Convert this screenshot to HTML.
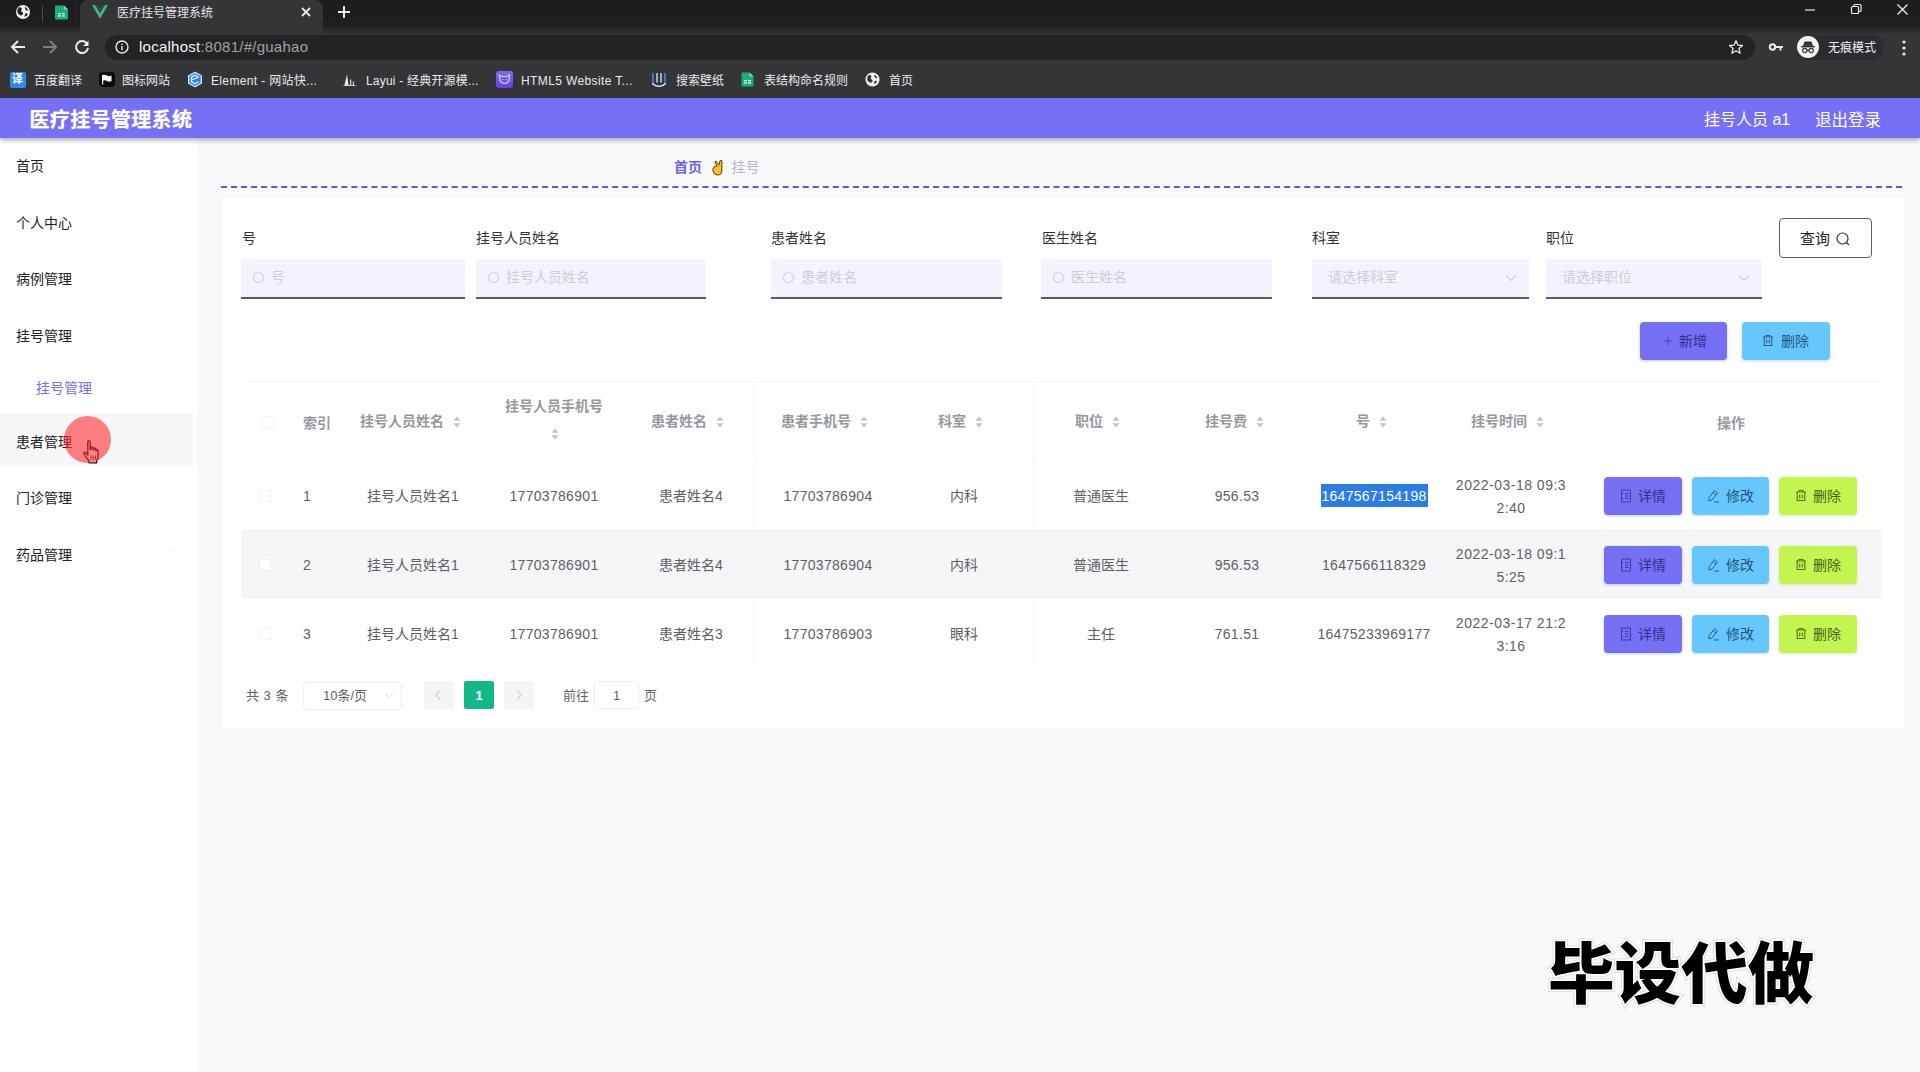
<!DOCTYPE html>
<html lang="zh-CN">
<head>
<meta charset="utf-8">
<title>医疗挂号管理系统</title>
<style>
*{box-sizing:border-box;margin:0;padding:0}
html,body{width:1920px;height:1072px;overflow:hidden}
body{font-family:"Liberation Sans","Noto Sans CJK SC",sans-serif;background:#f9f9fc;color:#333;position:relative;font-size:14px}
.abs{position:absolute}
.t{position:absolute;white-space:nowrap;line-height:1}
/* browser chrome */
#tabstrip{left:0;top:0;width:1920px;height:28px;background:linear-gradient(#1d1d20 0,#1d1d20 20px,#212124 27px,#2a2a2d 27px)}
#toolbar{left:0;top:27px;width:1920px;height:71px;background:#353538}
#activetab{left:80px;top:0;width:243px;height:27px;background:#353538;border-radius:8px 8px 0 0}
#pin2{left:46px;top:0;width:32px;height:27px;background:#1f1f22}
#omni{left:105px;top:35px;width:1650px;height:25px;border-radius:12.500px;background:#232326}
.ct{color:#e8eaed;font-size:12px}
/* app */
#hdr{left:0;top:98px;width:1920px;height:40px;background:#7670f5;box-shadow:0 2px 5px rgba(60,60,80,.45)}
#side{left:0;top:138px;width:197px;height:934px;background:#fff}
#hover{left:0;top:413px;width:193px;height:53px;background:#f7f7fa}
.mi{font-size:14px;color:#222;left:16px}
#card{left:222px;top:198px;width:1682px;height:531px;background:#fff}
#dash{left:221px;top:186px;width:1681px;height:0;border-top:2px dashed #6a63e6}
.lbl{font-size:14px;color:#333}
.inp{height:40px;background:#f4f2fd;border-bottom:2px solid #5b5a6a;top:258.500px}
.ph{font-size:14px;color:#cdcdd6}
.btn{border-radius:4px;height:40px}
.th{font-size:14px;color:#96989f;font-weight:bold}
.td{font-size:14px;color:#5c5f66}
.n{letter-spacing:.3px}
.d{letter-spacing:.5px}
.row{left:241px;width:1641px;height:69px}
.ob{width:78px;height:38px;border-radius:4px;top:0}
</style>
</head>
<body>
<!-- ===== browser chrome ===== -->
<div class="abs" id="tabstrip"></div>
<div class="abs" id="toolbar"></div>
<div class="abs" style="left:0;top:27px;width:80px;height:7px;background:linear-gradient(#232326,#333336)"></div>
<div class="abs" style="left:323px;top:27px;width:1597px;height:7px;background:linear-gradient(#232326,#333336)"></div>
<div class="abs" id="pin2"></div>
<div class="abs" id="activetab"></div>
<div class="abs" id="omni"></div>

<!-- pinned tab 1: globe -->
<svg class="abs" style="left:15px;top:4px" width="16" height="16" viewBox="0 0 16 16"><circle cx="8" cy="8" r="7" fill="#f1f3f4"/><path d="M4.2 3.2c1.3-.2 2.3.4 2.6 1.4.3 1-.9 1.600-.6 2.600.3.900 1.700.700 1.900 1.800.2 1-.8 2.200-2 2.400C4 11 2.500 9.500 2.300 8c-.2-1.800.7-3.800 1.900-4.800zM10 3c1.500.600 2.800 2 3.100 3.600-.9.300-1.900-.1-2.400-.9C10.200 4.900 9.600 3.900 10 3zM10.500 9.500c.8-.4 1.800-.2 2.300.4-.5 1.400-1.600 2.500-3 3-.3-1.200 0-2.800.7-3.400z" fill="#202124"/></svg>
<div class="abs" style="left:42px;top:5px;width:1px;height:17px;background:#4a4c50"></div>
<!-- pinned tab 2: sheets -->
<svg class="abs" style="left:54px;top:5px" width="15" height="15" viewBox="0 0 15 15"><path d="M1 1.500Q1 .5 2 .5H10L14 4.500V13.500Q14 14.500 13 14.500H2Q1 14.500 1 13.500Z" fill="#17b077"/><path d="M10 .5L14 4.500H10Z" fill="#8ed1b1"/><rect x="4" y="8" width="3" height="1.300" fill="#e6f4ec"/><rect x="8" y="8" width="3" height="1.300" fill="#e6f4ec"/><rect x="4" y="10.300" width="3" height="1.300" fill="#e6f4ec"/><rect x="8" y="10.300" width="3" height="1.300" fill="#e6f4ec"/></svg>
<!-- vue logo -->
<svg class="abs" style="left:92px;top:5px" width="16" height="14" viewBox="0 0 16 14"><path d="M0 0H3.200L8 8.300 12.800 0H16L8 13.800Z" fill="#41b883"/><path d="M3.200 0H6L8 3.500 10 0H12.800L8 8.300Z" fill="#35495e"/></svg>
<div class="t ct" style="left:117px;top:7px;color:#e4e6ea">医疗挂号管理系统</div>
<svg class="abs" style="left:301px;top:7px" width="10" height="10" viewBox="0 0 10 10"><path d="M1 1L9 9M9 1L1 9" stroke="#e8eaed" stroke-width="1.800"/></svg>
<svg class="abs" style="left:337px;top:5px" width="14" height="14" viewBox="0 0 14 14"><path d="M7 1V13M1 7H13" stroke="#e8eaed" stroke-width="2"/></svg>
<!-- window controls -->
<svg class="abs" style="left:1804px;top:4px" width="12" height="12" viewBox="0 0 12 12"><path d="M1 6H11" stroke="#e8eaed" stroke-width="1.200"/></svg>
<svg class="abs" style="left:1850px;top:3px" width="13" height="13" viewBox="0 0 13 13"><rect x="1.500" y="3.500" width="7" height="7" rx="1" fill="none" stroke="#e8eaed" stroke-width="1.200"/><path d="M4 3.500V2.500Q4 1.500 5 1.500H10Q11 1.500 11 2.500V7.500Q11 8.500 10 8.500H9" fill="none" stroke="#e8eaed" stroke-width="1.200"/></svg>
<svg class="abs" style="left:1896px;top:3px" width="13" height="13" viewBox="0 0 13 13"><path d="M1.500 1.500L11.500 11.500M11.500 1.500L1.500 11.500" stroke="#e8eaed" stroke-width="1.400"/></svg>
<!-- nav buttons -->
<svg class="abs" style="left:10px;top:39px" width="16" height="16" viewBox="0 0 16 16"><path d="M15 8H2.500M8 2L2 8L8 14" fill="none" stroke="#e8eaed" stroke-width="2"/></svg>
<svg class="abs" style="left:42px;top:39px" width="16" height="16" viewBox="0 0 16 16"><path d="M1 8H13.500M8 2L14 8L8 14" fill="none" stroke="#7b7e83" stroke-width="2"/></svg>
<svg class="abs" style="left:74px;top:39px" width="16" height="16" viewBox="0 0 16 16"><path d="M13.200 5A6 6 0 1 0 14 8.800" fill="none" stroke="#e8eaed" stroke-width="2"/><path d="M14.500 1.500V7H9Z" fill="#e8eaed"/></svg>
<!-- omnibox content -->
<svg class="abs" style="left:115px;top:40px" width="14" height="14" viewBox="0 0 14 14"><circle cx="7" cy="7" r="6" fill="none" stroke="#e8eaed" stroke-width="1.400"/><rect x="6.300" y="6" width="1.400" height="4.200" fill="#e8eaed"/><rect x="6.300" y="3.600" width="1.400" height="1.400" fill="#e8eaed"/></svg>
<div class="t" style="left:139px;top:39px;font-size:15px;color:#f1f3f4;letter-spacing:.25px">localhost<span style="color:#a0a1a5">:8081/#/guahao</span></div>
<!-- star, key, incognito, menu -->
<svg class="abs" style="left:1728px;top:39px" width="16" height="16" viewBox="0 0 16 16"><path d="M8 1.800L9.900 6.100 14.500 6.500 11 9.600 12.100 14.200 8 11.700 3.900 14.200 5 9.600 1.500 6.500 6.100 6.100Z" fill="none" stroke="#e8eaed" stroke-width="1.300" stroke-linejoin="round"/></svg>
<svg class="abs" style="left:1768px;top:41px" width="16" height="12" viewBox="0 0 16 12"><circle cx="4.500" cy="6" r="2.700" fill="none" stroke="#e8eaed" stroke-width="2"/><path d="M7 6H15M12.500 6V9.500" stroke="#e8eaed" stroke-width="2" fill="none"/></svg>
<div class="abs" style="left:1796px;top:35px;width:88px;height:25px;border-radius:12.500px;background:#2b2c30"></div>
<svg class="abs" style="left:1797px;top:36px" width="22" height="22" viewBox="0 0 22 22"><circle cx="11" cy="11" r="11" fill="#f1f3f4"/><path d="M7.500 5.500h7l1.500 4.500H6Z" fill="#35363a"/><rect x="4" y="10" width="14" height="1.400" fill="#35363a"/><circle cx="7.800" cy="14.500" r="2.200" fill="none" stroke="#35363a" stroke-width="1.200"/><circle cx="14.200" cy="14.500" r="2.200" fill="none" stroke="#35363a" stroke-width="1.200"/><path d="M10 14.200h2" stroke="#35363a" stroke-width="1.200"/></svg>
<div class="t ct" style="left:1828px;top:42px;font-size:12px;color:#f1f3f4">无痕模式</div>
<svg class="abs" style="left:1902px;top:40px" width="4" height="16" viewBox="0 0 4 16"><circle cx="2" cy="2" r="1.600" fill="#e8eaed"/><circle cx="2" cy="8" r="1.600" fill="#e8eaed"/><circle cx="2" cy="14" r="1.600" fill="#e8eaed"/></svg>

<!-- bookmarks -->
<div class="abs" style="left:10px;top:72px;width:16px;height:16px;border-radius:2px;background:#2a8bf0"></div>
<div class="t" style="left:12px;top:74px;font-size:11px;color:#fff;font-weight:bold">译</div>
<div class="t ct" style="left:34px;top:74.500px">百度翻译</div>
<div class="abs" style="left:99px;top:72px;width:16px;height:15px;border-radius:4px;background:#0b0b0c"></div>
<svg class="abs" style="left:101px;top:74px" width="12" height="11" viewBox="0 0 12 11"><path d="M1.500 1Q4 .2 6 1.500T10.500 1.500V7Q8 8.300 6 7T1.500 7Z" fill="#fff"/><rect x="1" y="1" width="1.200" height="9.500" fill="#fff"/></svg>
<div class="t ct" style="left:122px;top:74.500px">图标网站</div>
<svg class="abs" style="left:187px;top:71px" width="16" height="17" viewBox="0 0 16 17"><path d="M8 1.200L14.300 4.800V12.200L8 15.800 1.700 12.200V4.800Z" fill="#2f86e6" stroke="#d6e9ff" stroke-width="1.300" stroke-linejoin="round"/><path d="M11.500 6.200L8 4.200 4.500 6.200V10.800L8 12.800 11.500 10.800M5 8.800L11.500 6.200" fill="none" stroke="#eaf4ff" stroke-width="1.200"/></svg>
<div class="t ct" style="left:211px;top:74.500px;letter-spacing:.35px">Element - 网站快...</div>
<svg class="abs" style="left:343px;top:73px" width="13" height="14" viewBox="0 0 13 14"><path d="M4 1.500L5.500 12H1.500Z" fill="#e8eaed"/><path d="M7 6.500h1.300V12H7ZM9.800 8.500h1.200V12H9.800Z" fill="#c9ccd1"/><rect x=".5" y="12" width="12" height="1" fill="#c9ccd1"/></svg>
<div class="t ct" style="left:366px;top:74.500px;letter-spacing:.2px">Layui - 经典开源模...</div>
<div class="abs" style="left:496px;top:71px;width:17px;height:17px;border-radius:3px;background:linear-gradient(180deg,#7b6cf0,#6a3fd8)"></div>
<svg class="abs" style="left:498px;top:74px" width="13" height="11" viewBox="0 0 13 11"><path d="M1.500 1L4 2.500H9L11.500 1 11 6.500Q9.500 9.500 6.500 9.500T2 6.500Z" fill="none" stroke="#c9d3ff" stroke-width="1.200"/><path d="M4.500 5.500h1M7.500 5.500h1" stroke="#c9d3ff" stroke-width="1.200"/></svg>
<div class="t ct" style="left:521px;top:74.500px;letter-spacing:.38px">HTML5 Website T...</div>
<svg class="abs" style="left:651px;top:71px" width="16" height="17" viewBox="0 0 16 17"><path d="M2 2V11Q2 15 8 15T14 11V2" fill="none" stroke="#4b8ff0" stroke-width="1.400"/><path d="M6 2V11.500M10 2V11.500" stroke="#dfe8f7" stroke-width="1.300"/><path d="M1 12.500Q8 18.500 15 12.500" fill="none" stroke="#dfe8f7" stroke-width="1.200"/></svg>
<div class="t ct" style="left:676px;top:74.500px">搜索壁纸</div>
<svg class="abs" style="left:741px;top:72px" width="13" height="15" viewBox="0 0 13 15"><path d="M.5 1.500Q.5 .5 1.500 .5H8.500L12.500 4.500V13.500Q12.500 14.500 11.500 14.500H1.500Q.5 14.500 .5 13.500Z" fill="#17b077"/><path d="M8.500 .5L12.500 4.500H8.500Z" fill="#8ed1b1"/><rect x="3" y="8" width="3" height="1.300" fill="#e6f4ec"/><rect x="7" y="8" width="3" height="1.300" fill="#e6f4ec"/><rect x="3" y="10.300" width="3" height="1.300" fill="#e6f4ec"/><rect x="7" y="10.300" width="3" height="1.300" fill="#e6f4ec"/></svg>
<div class="t ct" style="left:764px;top:74.500px">表结构命名规则</div>
<svg class="abs" style="left:865px;top:72px" width="15" height="15" viewBox="0 0 16 16"><circle cx="8" cy="8" r="7.500" fill="#f1f3f4"/><path d="M4.200 3.200c1.300-.2 2.300.4 2.600 1.400.3 1-.9 1.600-.6 2.600.3.900 1.700.7 1.900 1.800.2 1-.8 2.200-2 2.400C4 11 2.500 9.500 2.300 8c-.2-1.800.7-3.800 1.900-4.800zM10 3c1.500.6 2.800 2 3.100 3.600-.9.300-1.900-.1-2.400-.9C10.200 4.900 9.600 3.900 10 3zM10.500 9.500c.8-.4 1.800-.2 2.300.4-.5 1.400-1.600 2.500-3 3-.3-1.200 0-2.800.7-3.400z" fill="#35363a"/></svg>
<div class="t ct" style="left:889px;top:74.500px">首页</div>



<!-- ===== app ===== -->
<div class="abs" id="side"></div>
<div class="abs" id="hover"></div>
<div class="abs" id="hdr"></div>
<div class="t" style="left:29.500px;top:110px;font-size:20px;letter-spacing:.35px;font-weight:bold;color:#fff;text-shadow:0 0 1px rgba(255,255,255,.6)">医疗挂号管理系统</div>
<div class="t" style="left:1704px;top:111.500px;font-size:16px;color:#fff">挂号人员 a1</div>
<div class="t" style="left:1815px;top:111.500px;font-size:16.500px;color:#fff">退出登录</div>
<div class="t" style="left:16px;top:159px;font-size:14px;color:#222">首页</div>
<div class="t" style="left:16px;top:216px;font-size:14px;color:#222">个人中心</div>
<div class="t" style="left:16px;top:272px;font-size:14px;color:#222">病例管理</div>
<div class="t" style="left:16px;top:329px;font-size:14px;color:#222">挂号管理</div>
<div class="t" style="left:36px;top:381px;font-size:14px;color:#7670f5">挂号管理</div>
<div class="t" style="left:16px;top:435px;font-size:14px;color:#222">患者管理</div>
<div class="t" style="left:16px;top:491px;font-size:14px;color:#222">门诊管理</div>
<div class="t" style="left:16px;top:547.500px;font-size:14px;color:#222">药品管理</div>
<svg class="abs" style="left:164px;top:217px" width="12" height="8" viewBox="0 0 12 8"><path d="M1 6L6 1.500L11 6" fill="none" stroke="#f6f6f9" stroke-width="1.200"/></svg>
<svg class="abs" style="left:164px;top:273px" width="12" height="8" viewBox="0 0 12 8"><path d="M1 6L6 1.500L11 6" fill="none" stroke="#f6f6f9" stroke-width="1.200"/></svg>
<svg class="abs" style="left:164px;top:329px" width="12" height="8" viewBox="0 0 12 8"><path d="M1 6L6 1.500L11 6" fill="none" stroke="#f6f6f9" stroke-width="1.200"/></svg>
<svg class="abs" style="left:164px;top:547px" width="12" height="8" viewBox="0 0 12 8"><path d="M1 6L6 1.500L11 6" fill="none" stroke="#f6f6f9" stroke-width="1.200"/></svg>
<svg class="abs" style="left:81.500px;top:439.500px" width="18" height="24.500" viewBox="0 0 22 30"><path d="M7 2.500Q7 1 8.500 1T10 2.500V11.500H11V9.500Q11 8.500 12.300 8.500T13.600 9.800V12H14.500V10.800Q14.500 10 15.600 10T16.800 11V13H17.500V12.300Q17.500 11.600 18.500 11.600T19.600 12.800V19Q19.600 23 17.800 25.500V28H8.500V25.500Q5 21 2.500 17.500 1.600 16 2.800 15.300T5 16L7 18.500Z" fill="#fff" stroke="#111" stroke-width="1.700" stroke-linejoin="round"/><path d="M11 19V24M13.800 19V24M16.500 19V24" stroke="#111" stroke-width="1"/></svg>
<div class="abs" style="left:64px;top:416px;width:47px;height:47px;border-radius:50%;background:rgba(255,45,45,.6)"></div>
<div class="t" style="left:674px;top:160px;font-size:14px;font-weight:bold;color:#6a63e6">首页</div>
<svg class="abs" style="left:712px;top:159px" width="11" height="17" viewBox="0 0 11 17"><path d="M2 8Q.4 9.500 1 12Q2 16 5.500 16Q9.700 16 9.700 12L10 2.500Q10 1.300 9 1.300Q8 1.300 7.800 2.500L7 6L4.600 2.600Q3.900 1.800 3.200 2.400Q2.600 3 3.200 3.900L5.200 7.300Q3.500 7 2 8Z" fill="#f9c22b" stroke="#4a3b00" stroke-width="1" stroke-linejoin="round"/></svg>
<div class="t" style="left:731.500px;top:160px;font-size:14px;color:#b6b8c0">挂号</div>
<svg class="abs" id="dashline" style="left:221px;top:186px" width="1682" height="2" viewBox="0 0 1682 2"><line x1="0" y1="1" x2="1681.500" y2="1" stroke="#5f55de" stroke-width="2" stroke-dasharray="6 4.030"/></svg>
<div class="abs" id="card"></div>
<div class="t lbl" style="left:242px;top:231px">号</div>
<div class="t lbl" style="left:476px;top:231px">挂号人员姓名</div>
<div class="t lbl" style="left:771px;top:231px">患者姓名</div>
<div class="t lbl" style="left:1042px;top:231px">医生姓名</div>
<div class="t lbl" style="left:1312px;top:231px">科室</div>
<div class="t lbl" style="left:1546px;top:231px">职位</div>
<div class="abs inp" style="left:241px;width:224px"></div>
<svg class="abs" style="left:252px;top:271px" width="14" height="14" viewBox="0 0 14 14"><circle cx="6.500" cy="6.500" r="5" fill="none" stroke="#d4d4de" stroke-width="1.200"/></svg>
<div class="t ph" style="left:271px;top:270px">号</div>
<div class="abs inp" style="left:476px;width:230px"></div>
<svg class="abs" style="left:487px;top:271px" width="14" height="14" viewBox="0 0 14 14"><circle cx="6.500" cy="6.500" r="5" fill="none" stroke="#d4d4de" stroke-width="1.200"/></svg>
<div class="t ph" style="left:506px;top:270px">挂号人员姓名</div>
<div class="abs inp" style="left:771px;width:231px"></div>
<svg class="abs" style="left:782px;top:271px" width="14" height="14" viewBox="0 0 14 14"><circle cx="6.500" cy="6.500" r="5" fill="none" stroke="#d4d4de" stroke-width="1.200"/></svg>
<div class="t ph" style="left:801px;top:270px">患者姓名</div>
<div class="abs inp" style="left:1041px;width:231px"></div>
<svg class="abs" style="left:1052px;top:271px" width="14" height="14" viewBox="0 0 14 14"><circle cx="6.500" cy="6.500" r="5" fill="none" stroke="#d4d4de" stroke-width="1.200"/></svg>
<div class="t ph" style="left:1071px;top:270px">医生姓名</div>
<div class="abs inp" style="left:1312px;width:217px"></div>
<div class="t ph" style="left:1328px;top:270px">请选择科室</div>
<svg class="abs" style="left:1505px;top:274px" width="12" height="8" viewBox="0 0 12 8"><path d="M1 1.500L6 6.500L11 1.500" fill="none" stroke="#d0d0da" stroke-width="1.200"/></svg>
<div class="abs inp" style="left:1546px;width:216px"></div>
<div class="t ph" style="left:1562px;top:270px">请选择职位</div>
<svg class="abs" style="left:1738px;top:274px" width="12" height="8" viewBox="0 0 12 8"><path d="M1 1.500L6 6.500L11 1.500" fill="none" stroke="#d0d0da" stroke-width="1.200"/></svg>
<div class="abs" style="left:1779px;top:218px;width:93px;height:40px;border:1px solid #606060;border-radius:4px;background:#fff"></div>
<div class="t" style="left:1800px;top:231px;font-size:15px;color:#222">查询</div>
<svg class="abs" style="left:1835px;top:231px" width="16" height="16" viewBox="0 0 16 16"><circle cx="7.500" cy="7.500" r="5.500" fill="none" stroke="#333" stroke-width="1.200"/><path d="M11.500 11.500L14 14" stroke="#333" stroke-width="1.200"/></svg>
<div class="abs btn" style="left:1640px;top:322px;width:87px;height:38px;background:#756ff6;box-shadow:0 1px 3px rgba(90,90,160,.35)"></div>
<svg class="abs" style="left:1663px;top:336px" width="10" height="10" viewBox="0 0 10 10"><path d="M5 1V9M1 5H9" stroke="#4a44b4" stroke-width="1"/></svg>
<div class="t" style="left:1679px;top:334px;font-size:14px;color:#342f86">新增</div>
<div class="abs btn" style="left:1742px;top:322px;width:88px;height:38px;background:#66c7ff;box-shadow:0 1px 3px rgba(90,140,180,.35)"></div>
<svg class="abs" style="left:1762px;top:334px" width="12" height="13" viewBox="0 0 12 13"><path d="M1 3H11M4 3V1.500H8V3M2.200 3V11.500H9.800V3M4.700 5.500V9.500M7.300 5.500V9.500" fill="none" stroke="#2f5f86" stroke-width="1.100"/></svg>
<div class="t" style="left:1781px;top:334px;font-size:14px;color:#245478">删除</div>
<div class="abs" style="left:241px;top:381px;width:1641px;height:1px;background:#f6f6f9"></div>
<div class="abs" style="left:241px;top:460px;width:1641px;height:1px;background:#f8f8fa"></div>
<div class="abs" style="left:755px;top:381px;width:1px;height:287px;background:#f8f8fa"></div>
<div class="abs" style="left:1033px;top:381px;width:1px;height:287px;background:#f8f8fa"></div>
<div class="abs" style="left:262px;top:416px;width:12px;height:12px;border:1px solid #f5f5f9;border-radius:2px;background:#fff"></div>
<div class="t th" style="left:303px;top:416px">索引</div>
<div class="t th" style="left:360px;top:414px">挂号人员姓名</div>
<svg class="abs" style="left:452px;top:415px" width="10" height="14" viewBox="0 0 10 14"><path d="M5 1.500L8.600 5.800H1.400Z" fill="#c0c4cc"/><path d="M5 12.500L8.600 8.200H1.400Z" fill="#c0c4cc"/></svg>
<div class="t th" style="left:651px;top:414px">患者姓名</div>
<svg class="abs" style="left:715px;top:415px" width="10" height="14" viewBox="0 0 10 14"><path d="M5 1.500L8.600 5.800H1.400Z" fill="#c0c4cc"/><path d="M5 12.500L8.600 8.200H1.400Z" fill="#c0c4cc"/></svg>
<div class="t th" style="left:781px;top:414px">患者手机号</div>
<svg class="abs" style="left:859px;top:415px" width="10" height="14" viewBox="0 0 10 14"><path d="M5 1.500L8.600 5.800H1.400Z" fill="#c0c4cc"/><path d="M5 12.500L8.600 8.200H1.400Z" fill="#c0c4cc"/></svg>
<div class="t th" style="left:938px;top:414px">科室</div>
<svg class="abs" style="left:974px;top:415px" width="10" height="14" viewBox="0 0 10 14"><path d="M5 1.500L8.600 5.800H1.400Z" fill="#c0c4cc"/><path d="M5 12.500L8.600 8.200H1.400Z" fill="#c0c4cc"/></svg>
<div class="t th" style="left:1075px;top:414px">职位</div>
<svg class="abs" style="left:1111px;top:415px" width="10" height="14" viewBox="0 0 10 14"><path d="M5 1.500L8.600 5.800H1.400Z" fill="#c0c4cc"/><path d="M5 12.500L8.600 8.200H1.400Z" fill="#c0c4cc"/></svg>
<div class="t th" style="left:1205px;top:414px">挂号费</div>
<svg class="abs" style="left:1255px;top:415px" width="10" height="14" viewBox="0 0 10 14"><path d="M5 1.500L8.600 5.800H1.400Z" fill="#c0c4cc"/><path d="M5 12.500L8.600 8.200H1.400Z" fill="#c0c4cc"/></svg>
<div class="t th" style="left:1356px;top:414px">号</div>
<svg class="abs" style="left:1378px;top:415px" width="10" height="14" viewBox="0 0 10 14"><path d="M5 1.500L8.600 5.800H1.400Z" fill="#c0c4cc"/><path d="M5 12.500L8.600 8.200H1.400Z" fill="#c0c4cc"/></svg>
<div class="t th" style="left:1471px;top:414px">挂号时间</div>
<svg class="abs" style="left:1535px;top:415px" width="10" height="14" viewBox="0 0 10 14"><path d="M5 1.500L8.600 5.800H1.400Z" fill="#c0c4cc"/><path d="M5 12.500L8.600 8.200H1.400Z" fill="#c0c4cc"/></svg>
<div class="t th" style="left:505px;top:399px">挂号人员手机号</div>
<svg class="abs" style="left:550px;top:427px" width="10" height="14" viewBox="0 0 10 14"><path d="M5 1.500L8.600 5.800H1.400Z" fill="#c0c4cc"/><path d="M5 12.500L8.600 8.200H1.400Z" fill="#c0c4cc"/></svg>
<div class="t th" style="left:1717px;top:416px">操作</div>
<div class="abs row" style="top:529px;height:70px;background:#f6f6f8"></div>
<div class="abs" style="left:259px;top:490px;width:12px;height:12px;border:1px solid #f1f1f5;border-radius:2px;background:#fff"></div>
<div class="t td" style="left:303px;top:489px">1</div>
<div class="t td" style="left:313px;width:200px;text-align:center;top:489px;">挂号人员姓名1</div>
<div class="t td n" style="left:454px;width:200px;text-align:center;top:489px;">17703786901</div>
<div class="t td" style="left:591px;width:200px;text-align:center;top:489px;">患者姓名4</div>
<div class="t td n" style="left:728px;width:200px;text-align:center;top:489px;">17703786904</div>
<div class="t td" style="left:864px;width:200px;text-align:center;top:489px;">内科</div>
<div class="t td" style="left:1001px;width:200px;text-align:center;top:489px;">普通医生</div>
<div class="t td n" style="left:1137px;width:200px;text-align:center;top:489px;">956.53</div>
<div class="abs" style="left:1321px;top:484px;width:107px;height:23px;background:#2a7de6"></div>
<div class="t td n" style="left:1274px;width:200px;text-align:center;top:489px;color:#fff;">1647567154198</div>
<div class="t td d" style="left:1411px;width:200px;text-align:center;top:478px;">2022-03-18 09:3</div>
<div class="t td d" style="left:1411px;width:200px;text-align:center;top:501px;">2:40</div>
<div class="abs ob" style="left:1604px;top:477px;background:#7670f5;box-shadow:0 1px 3px rgba(90,90,160,.3)"></div>
<svg class="abs" style="left:1620px;top:489px" width="12" height="14" viewBox="0 0 12 14"><path d="M1.500 1H10.500V13H1.500ZM1.500 4.500H3M1.500 9.500H3M5 4.500H8.500M5 7H8.500M5 9.500H8.500" fill="none" stroke="#3f3a9c" stroke-width="1"/></svg>
<div class="t" style="left:1638px;top:489px;font-size:14px;color:#34308a">详情</div>
<div class="abs ob" style="left:1692px;width:77px;top:477px;background:#66c7ff;box-shadow:0 1px 3px rgba(90,140,180,.3)"></div>
<svg class="abs" style="left:1707px;top:489px" width="13" height="14" viewBox="0 0 13 14"><path d="M7.500 1.500L10.500 4 5 11 1.800 11.800 2.200 8.500ZM6 3.500L9 6M7 13H12" fill="none" stroke="#2f5f86" stroke-width="1"/></svg>
<div class="t" style="left:1726px;top:489px;font-size:14px;color:#245478">修改</div>
<div class="abs ob" style="left:1779px;top:477px;background:#c3f550;box-shadow:0 1px 3px rgba(140,170,60,.3)"></div>
<svg class="abs" style="left:1795px;top:489px" width="12" height="13" viewBox="0 0 12 13"><path d="M1 3H11M4 3V1.500H8V3M2.200 3V11.500H9.800V3M4.700 5.500V9.500M7.300 5.500V9.500" fill="none" stroke="#56701c" stroke-width="1.100"/></svg>
<div class="t" style="left:1813px;top:489px;font-size:14px;color:#486214">删除</div>
<div class="abs" style="left:259px;top:559px;width:12px;height:12px;border:1px solid #f1f1f5;border-radius:2px;background:#fff"></div>
<div class="t td" style="left:303px;top:558px">2</div>
<div class="t td" style="left:313px;width:200px;text-align:center;top:558px;">挂号人员姓名1</div>
<div class="t td n" style="left:454px;width:200px;text-align:center;top:558px;">17703786901</div>
<div class="t td" style="left:591px;width:200px;text-align:center;top:558px;">患者姓名4</div>
<div class="t td n" style="left:728px;width:200px;text-align:center;top:558px;">17703786904</div>
<div class="t td" style="left:864px;width:200px;text-align:center;top:558px;">内科</div>
<div class="t td" style="left:1001px;width:200px;text-align:center;top:558px;">普通医生</div>
<div class="t td n" style="left:1137px;width:200px;text-align:center;top:558px;">956.53</div>
<div class="t td n" style="left:1274px;width:200px;text-align:center;top:558px;">1647566118329</div>
<div class="t td d" style="left:1411px;width:200px;text-align:center;top:547px;">2022-03-18 09:1</div>
<div class="t td d" style="left:1411px;width:200px;text-align:center;top:570px;">5:25</div>
<div class="abs ob" style="left:1604px;top:546px;background:#7670f5;box-shadow:0 1px 3px rgba(90,90,160,.3)"></div>
<svg class="abs" style="left:1620px;top:558px" width="12" height="14" viewBox="0 0 12 14"><path d="M1.500 1H10.500V13H1.500ZM1.500 4.500H3M1.500 9.500H3M5 4.500H8.500M5 7H8.500M5 9.500H8.500" fill="none" stroke="#3f3a9c" stroke-width="1"/></svg>
<div class="t" style="left:1638px;top:558px;font-size:14px;color:#34308a">详情</div>
<div class="abs ob" style="left:1692px;width:77px;top:546px;background:#66c7ff;box-shadow:0 1px 3px rgba(90,140,180,.3)"></div>
<svg class="abs" style="left:1707px;top:558px" width="13" height="14" viewBox="0 0 13 14"><path d="M7.500 1.500L10.500 4 5 11 1.800 11.800 2.200 8.500ZM6 3.500L9 6M7 13H12" fill="none" stroke="#2f5f86" stroke-width="1"/></svg>
<div class="t" style="left:1726px;top:558px;font-size:14px;color:#245478">修改</div>
<div class="abs ob" style="left:1779px;top:546px;background:#c3f550;box-shadow:0 1px 3px rgba(140,170,60,.3)"></div>
<svg class="abs" style="left:1795px;top:558px" width="12" height="13" viewBox="0 0 12 13"><path d="M1 3H11M4 3V1.500H8V3M2.200 3V11.500H9.800V3M4.700 5.500V9.500M7.300 5.500V9.500" fill="none" stroke="#56701c" stroke-width="1.100"/></svg>
<div class="t" style="left:1813px;top:558px;font-size:14px;color:#486214">删除</div>
<div class="abs" style="left:259px;top:628px;width:12px;height:12px;border:1px solid #f1f1f5;border-radius:2px;background:#fff"></div>
<div class="t td" style="left:303px;top:627px">3</div>
<div class="t td" style="left:313px;width:200px;text-align:center;top:627px;">挂号人员姓名1</div>
<div class="t td n" style="left:454px;width:200px;text-align:center;top:627px;">17703786901</div>
<div class="t td" style="left:591px;width:200px;text-align:center;top:627px;">患者姓名3</div>
<div class="t td n" style="left:728px;width:200px;text-align:center;top:627px;">17703786903</div>
<div class="t td" style="left:864px;width:200px;text-align:center;top:627px;">眼科</div>
<div class="t td" style="left:1001px;width:200px;text-align:center;top:627px;">主任</div>
<div class="t td n" style="left:1137px;width:200px;text-align:center;top:627px;">761.51</div>
<div class="t td n" style="left:1274px;width:200px;text-align:center;top:627px;">16475233969177</div>
<div class="t td d" style="left:1411px;width:200px;text-align:center;top:616px;">2022-03-17 21:2</div>
<div class="t td d" style="left:1411px;width:200px;text-align:center;top:639px;">3:16</div>
<div class="abs ob" style="left:1604px;top:615px;background:#7670f5;box-shadow:0 1px 3px rgba(90,90,160,.3)"></div>
<svg class="abs" style="left:1620px;top:627px" width="12" height="14" viewBox="0 0 12 14"><path d="M1.500 1H10.500V13H1.500ZM1.500 4.500H3M1.500 9.500H3M5 4.500H8.500M5 7H8.500M5 9.500H8.500" fill="none" stroke="#3f3a9c" stroke-width="1"/></svg>
<div class="t" style="left:1638px;top:627px;font-size:14px;color:#34308a">详情</div>
<div class="abs ob" style="left:1692px;width:77px;top:615px;background:#66c7ff;box-shadow:0 1px 3px rgba(90,140,180,.3)"></div>
<svg class="abs" style="left:1707px;top:627px" width="13" height="14" viewBox="0 0 13 14"><path d="M7.500 1.500L10.500 4 5 11 1.800 11.800 2.200 8.500ZM6 3.500L9 6M7 13H12" fill="none" stroke="#2f5f86" stroke-width="1"/></svg>
<div class="t" style="left:1726px;top:627px;font-size:14px;color:#245478">修改</div>
<div class="abs ob" style="left:1779px;top:615px;background:#c3f550;box-shadow:0 1px 3px rgba(140,170,60,.3)"></div>
<svg class="abs" style="left:1795px;top:627px" width="12" height="13" viewBox="0 0 12 13"><path d="M1 3H11M4 3V1.500H8V3M2.200 3V11.500H9.800V3M4.700 5.500V9.500M7.300 5.500V9.500" fill="none" stroke="#56701c" stroke-width="1.100"/></svg>
<div class="t" style="left:1813px;top:627px;font-size:14px;color:#486214">删除</div>
<div class="t" style="left:246px;top:689px;font-size:13px;color:#606266;word-spacing:1px">共 3 条</div>
<div class="abs" style="left:303px;top:682px;width:99px;height:28px;border:1px solid #f0f0f4;border-radius:3px;background:#fff"></div>
<div class="t" style="left:323px;top:689px;font-size:13px;color:#606266">10条/页</div>
<svg class="abs" style="left:384px;top:692px" width="10" height="7" viewBox="0 0 10 7"><path d="M1 1L5 5.500L9 1" fill="none" stroke="#ececf1" stroke-width="1.200"/></svg>
<div class="abs" style="left:424px;top:681px;width:30px;height:28px;border-radius:2px;background:#f5f5f7"></div>
<svg class="abs" style="left:434px;top:689px" width="8" height="12" viewBox="0 0 8 12"><path d="M6 1.500L2 6L6 10.500" fill="none" stroke="#d2d4d9" stroke-width="1.300"/></svg>
<div class="abs" style="left:464px;top:681px;width:30px;height:28px;border-radius:2px;background:#13b887"></div>
<div class="t" style="left:464px;width:30px;text-align:center;top:689px;font-size:13px;font-weight:bold;color:#fff">1</div>
<div class="abs" style="left:504px;top:681px;width:30px;height:28px;border-radius:2px;background:#f5f5f7"></div>
<svg class="abs" style="left:515px;top:689px" width="8" height="12" viewBox="0 0 8 12"><path d="M2 1.500L6 6L2 10.500" fill="none" stroke="#d2d4d9" stroke-width="1.300"/></svg>
<div class="t" style="left:563px;top:689px;font-size:13px;color:#606266">前往</div>
<div class="abs" style="left:594px;top:681px;width:45px;height:28px;border:1px solid #f0f0f4;border-radius:3px;background:#fff"></div>
<div class="t" style="left:594px;width:45px;text-align:center;top:689px;font-size:13px;color:#606266">1</div>
<div class="t" style="left:644px;top:689px;font-size:13px;color:#606266">页</div>
<div class="t" aria-hidden="true" style="left:1548px;top:935.500px;font-size:66.600px;font-weight:900;font-family:'Noto Sans CJK SC',sans-serif;color:transparent;-webkit-text-stroke:5px rgba(150,150,160,.35)">毕设代做</div><div class="t" aria-hidden="true" style="left:1548px;top:935.500px;font-size:66.600px;font-weight:900;font-family:'Noto Sans CJK SC',sans-serif;color:#fff;-webkit-text-stroke:3.500px #fff">毕设代做</div><div class="t" id="wm" style="left:1548px;top:935.500px;font-size:66.600px;font-weight:900;font-family:'Noto Sans CJK SC',sans-serif;color:#000">毕设代做</div>


</body>
</html>
